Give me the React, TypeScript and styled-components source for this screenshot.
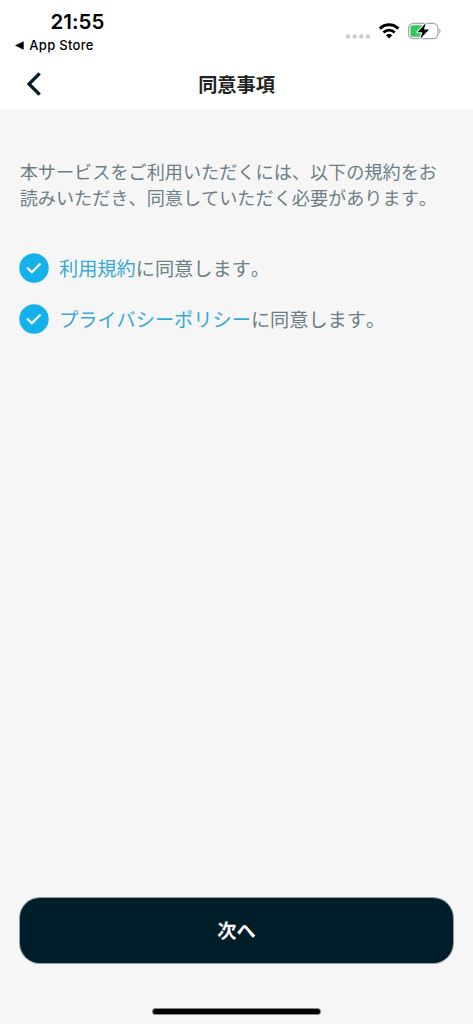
import React from 'react';
import styled, { createGlobalStyle } from 'styled-components';

const GlobalStyle = createGlobalStyle`
  * { box-sizing: border-box; }
  body {
    margin: 0;
    background: #f6f6f6;
    font-family: Inter, 'Noto Sans CJK JP', sans-serif;
  }
`;

const Screen = styled.div`
  display: flex;
  flex-direction: column;
  width: 473px;
  height: 1024px;
  background: #f6f6f6;
  overflow: hidden;
`;

const StatusBar = styled.div`
  display: flex;
  justify-content: space-between;
  height: 58px;
  padding: 10px 31px 0 15px;
  background: #fff;
  color: #000;
`;

const StatusLeft = styled.div`
  display: flex;
  flex-direction: column;
`;

const Clock = styled.div`
  padding-left: 35.4px;
  font-size: 20.5px;
  line-height: 24px;
  font-weight: 600;
  letter-spacing: 0.05px;
`;

const BackToApp = styled.div`
  display: flex;
  align-items: center;
  gap: 5.3px;
  height: 22px;
  font-size: 13px;
  font-weight: 500;
  letter-spacing: 0.3px;
  white-space: nowrap;
`;

const StatusIcons = styled.div`
  display: flex;
  align-items: flex-start;
  padding-top: 12px;
`;

const SignalDots = styled.svg`
  margin: 12px 8px 0 0;
`;

const WifiIcon = styled.svg`
  margin: 1px 8px 0 0;
`;

const Header = styled.header`
  display: grid;
  grid-template-columns: 60px 1fr 60px;
  align-items: center;
  height: 52px;
  background: #fff;
`;

const BackButton = styled.button`
  display: flex;
  height: 52px;
  padding: 14px 0 0 26px;
  border: 0;
  background: none;
`;

const Title = styled.h1`
  margin: 0;
  padding-top: 1px;
  color: #222;
  font-size: 19.2px;
  line-height: 28px;
  font-weight: 700;
  text-align: center;
`;

const Main = styled.main`
  flex: 1;
  padding: 49px 19px 0;
`;

const Lead = styled.p`
  margin: 0;
  padding-left: 0.7px;
  color: #6d7e86;
  font-size: 18.15px;
  line-height: 26px;
  font-kerning: none;
  white-space: nowrap;
`;

const Consents = styled.div`
  display: flex;
  flex-direction: column;
  gap: 21px;
  margin-top: 42px;
`;

const Consent = styled.div`
  display: flex;
  align-items: center;
  gap: 10px;
  height: 30px;
  color: #6d7e86;
  font-size: 19.2px;
  line-height: 30px;
  font-kerning: none;
  white-space: nowrap;
`;

const ConsentText = styled.span`
  padding-top: 2px;
`;

const Link = styled.span`
  color: #36a9d6;
`;

const Footer = styled.footer`
  display: flex;
  flex-direction: column;
  align-items: center;
  padding: 0 20px 10px;
`;

const NextButton = styled.button`
  width: 100%;
  height: 65px;
  margin-bottom: 46px;
  padding: 0 0 1px;
  border: 0;
  border-radius: 20px;
  background: #001e29;
  box-shadow: 0 0 0 1px rgba(0, 30, 41, 0.4);
  color: #fff;
  font-family: inherit;
  font-size: 19.2px;
  font-weight: 700;
`;

const HomeIndicator = styled.div`
  width: 167px;
  height: 5px;
  border-radius: 3px;
  background: #000;
  box-shadow: 0 0 0 1px rgba(0, 0, 0, 0.45);
`;

function Check() {
  return (
    <svg width="30" height="30" viewBox="0 0 30 30">
      <circle cx="15" cy="15" r="14.7" fill="#14b1ea" />
      <path d="M8.8 15.3l4 4 8-8" fill="none" stroke="#fff" strokeWidth="2.3" strokeLinecap="round" strokeLinejoin="round" />
    </svg>
  );
}

export default function App() {
  return (
    <Screen>
      <GlobalStyle />
      <StatusBar>
        <StatusLeft>
          <Clock>21:55</Clock>
          <BackToApp>
            <svg width="9" height="9" viewBox="0 0 9 9">
              <path d="M.6 4.5L8.4.7v7.6z" stroke="#000" strokeWidth=".6" strokeLinejoin="round" />
            </svg>
            App Store
          </BackToApp>
        </StatusLeft>
        <StatusIcons>
          <SignalDots width="25" height="5" viewBox="0 0 25 5" fill="#cfcfcf">
            {[2.1, 8.7, 15.3, 21.9].map((x) => (
              <circle key={x} cx={x} cy="2.5" r="2.3" />
            ))}
          </SignalDots>
          <WifiIcon width="21" height="16" viewBox="0 0 21 16" fill="none" stroke="#000">
            <path d="M.9 5.6a13 13 0 0 1 18.4 0" strokeWidth="3" />
            <path d="M4.5 9.4a7.9 7.9 0 0 1 11.2 0" strokeWidth="2.8" />
            <path d="M6.9 12.3a4.5 4.5 0 0 1 6.4 0L10.1 15.6z" fill="#000" stroke="none" />
          </WifiIcon>
          <svg width="34" height="18" viewBox="0 0 34 18">
            <rect x=".6" y="1.4" width="29.3" height="15.2" rx="4.7" fill="#fff" stroke="#a6a6a6" strokeWidth="1.2" />
            <path d="M5 3.2h10v11.6H5a2.6 2.6 0 0 1-2.6-2.6V5.8A2.6 2.6 0 0 1 5 3.2z" fill="#35c759" />
            <path d="M31.2 6.4c1.8.8 1.8 4.4 0 5.2z" fill="#a6a6a6" />
            <path
              d="M17.9 1.1L9.4 10.2h5l-2.2 6.9 8.8-9.5h-5.1z"
              fill="#000"
              stroke="#fff"
              strokeWidth="2"
              paintOrder="stroke"
              strokeLinejoin="round"
            />
          </svg>
        </StatusIcons>
      </StatusBar>
      <Header>
        <BackButton aria-label="戻る">
          <svg width="16" height="24" viewBox="0 0 16 24">
            <path d="M13.7 1.4L3 12l10.7 10.6" fill="none" stroke="#001e29" strokeWidth="3.3" />
          </svg>
        </BackButton>
        <Title>同意事項</Title>
      </Header>
      <Main>
        <Lead>
          本サービスをご利用いただくには、以下の規約をお
          <br />
          読みいただき、同意していただく必要があります。
        </Lead>
        <Consents>
          <Consent>
            <Check />
            <ConsentText>
              <Link>利用規約</Link>に同意します。
            </ConsentText>
          </Consent>
          <Consent>
            <Check />
            <ConsentText>
              <Link>プライバシーポリシー</Link>に同意します。
            </ConsentText>
          </Consent>
        </Consents>
      </Main>
      <Footer>
        <NextButton>次へ</NextButton>
        <HomeIndicator />
      </Footer>
    </Screen>
  );
}
